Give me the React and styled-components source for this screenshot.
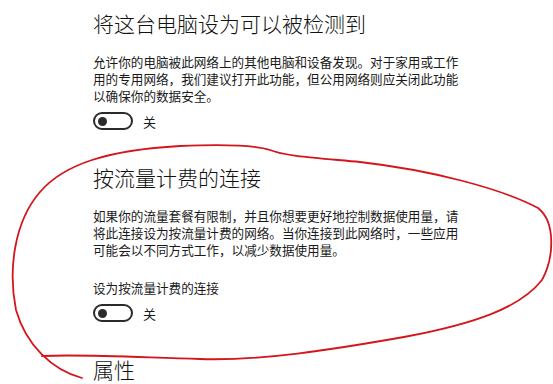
import styled, { createGlobalStyle } from 'styled-components';

const GlobalStyle = createGlobalStyle`
  html, body {
    margin: 0;
    padding: 0;
    background: #ffffff;
  }
  body {
    font-family: "Noto Sans CJK SC", "Noto Sans", sans-serif;
    color: #1a1a1a;
  }
`

const Page = styled.div`
  position: relative;
  width: 553px;
  height: 384px;
  overflow: hidden;
  box-sizing: border-box;
  padding: 9px 0 0 93px;
  display: flex;
  flex-direction: column;
  gap: 32px;
`

const Section = styled.section`
  display: flex;
  flex-direction: column;
`

const Title = styled.h2`
  margin: 0;
  font-size: 21px;
  line-height: 28px;
  font-weight: 300;
  color: #111;
`

const Description = styled.p`
  margin: 16px 0 0;
  width: 29.2em;
  font-size: 12.6px;
  line-height: 17px;
  color: #1a1a1a;
`

const Label = styled.div`
  margin-top: 21px;
  font-size: 12.6px;
  line-height: 17px;
  color: #1a1a1a;
`

const ToggleRow = styled.div`
  margin-top: ${props => props.$gap}px;
  display: flex;
  align-items: center;
  gap: 10px;
  height: 20px;
`

const Switch = styled.div`
  box-sizing: border-box;
  width: 40px;
  height: 18px;
  border: 2px solid #2b2b2b;
  border-radius: 9px;
  display: flex;
  align-items: center;
  padding-left: 3px;
`

const Knob = styled.span`
  width: 9px;
  height: 9px;
  border-radius: 50%;
  background: #2b2b2b;
`

const State = styled.span`
  font-size: 13px;
  color: #1a1a1a;
`

const Scribble = styled.svg`
  position: absolute;
  left: 0;
  top: 0;
  pointer-events: none;
`

const Toggle = ({ gap }) => (
  <ToggleRow $gap={gap}>
    <Switch>
      <Knob />
    </Switch>
    <State>关</State>
  </ToggleRow>
)

const App = () => {
  return (
    <>
      <GlobalStyle />
      <Page>
        <Section>
          <Title>将这台电脑设为可以被检测到</Title>
          <Description>
            允许你的电脑被此网络上的其他电脑和设备发现。对于家用或工作用的专用网络，我们建议打开此功能，但公用网络则应关闭此功能以确保你的数据安全。
          </Description>
          <Toggle gap={7} />
        </Section>
        <Section>
          <Title>按流量计费的连接</Title>
          <Description>
            如果你的流量套餐有限制，并且你想要更好地控制数据使用量，请将此连接设为按流量计费的网络。当你连接到此网络时，一些应用可能会以不同方式工作，以减少数据使用量。
          </Description>
          <Label>设为按流量计费的连接</Label>
          <Toggle gap={7} />
        </Section>
        <Section>
          <Title>属性</Title>
        </Section>
        <Scribble width="553" height="384" viewBox="0 0 553 384">
          <path
            d="M 82 378 C 52 370, 26 345, 16 310 C 8 270, 14 222, 40 192 C 64 164, 108 150, 180 146 C 228 144, 258 146, 270 150 C 284 156, 318 158, 360 162 C 430 170, 500 188, 538 208 C 556 222, 554 258, 542 280 C 520 308, 474 324, 404 337 C 330 350, 262 361, 200 359 C 132 357, 80 354, 42 356"
            fill="none"
            stroke="#d4161c"
            strokeWidth="1.8"
            strokeLinecap="round"
          />
        </Scribble>
      </Page>
    </>
  );
};

export default App;
